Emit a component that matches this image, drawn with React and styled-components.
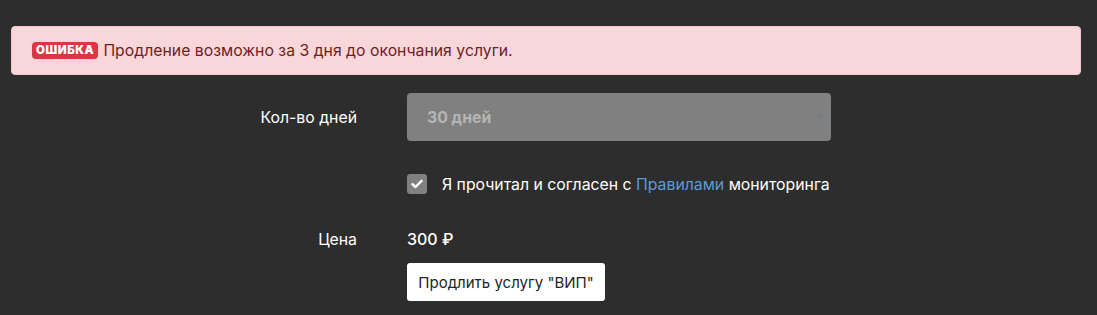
import React, { useState } from "react";
import styled, { createGlobalStyle } from "styled-components";

const GlobalStyle = createGlobalStyle`
  html, body {
    margin: 0;
    padding: 0;
    background: #2d2d2d;
    font-family: Inter, Roboto, "Noto Sans", sans-serif;
  }
`;

const Page = styled.div`
  padding: 26px 16px 0 11px;
`;

const Alert = styled.div`
  display: flex;
  align-items: center;
  height: 49px;
  box-sizing: border-box;
  padding: 0 20px;
  background: #f8d7da;
  border: 1px solid #f5c6cb;
  border-radius: 4px;
  color: #721c24;
  font-size: 15.8px;
`;

const Badge = styled.span`
  display: inline-block;
  background: #dc3545;
  color: #fff;
  font-size: 11.5px;
  font-weight: 900;
  line-height: 17px;
  padding: 0 4px;
  border-radius: 4px;
  margin-right: 5px;
  letter-spacing: 0.6px;
`;

const Form = styled.div`
  display: flex;
  flex-direction: column;
  margin-top: 18px;
`;

const Row = styled.div`
  display: flex;
  align-items: center;
  min-height: 20px;
  margin-bottom: ${(p) => p.gap || 0}px;
`;

const Label = styled.div`
  width: 120px;
  margin-left: 226px;
  margin-right: 50px;
  text-align: right;
  color: #fff;
  font-size: 15.8px;
  flex-shrink: 0;
`;

const Select = styled.div`
  position: relative;
  width: 424px;
  height: 48px;
  box-sizing: border-box;
  background: #808080;
  border-radius: 4px;
  padding: 0 20px;
  display: flex;
  align-items: center;
  color: #b5b5b5;
  font-size: 15.8px;
  font-weight: 700;
  &::after {
    content: "";
    position: absolute;
    right: 9px;
    top: 22px;
    border-left: 3px solid transparent;
    border-right: 3px solid transparent;
    border-top: 3px solid #6c7b8a;
  }
`;

const Check = styled.label`
  display: flex;
  align-items: center;
  gap: 15px;
  color: #fff;
  font-size: 15.8px;
  cursor: pointer;
`;

const Box = styled.span`
  width: 20px;
  height: 20px;
  border-radius: 3px;
  background: #808080;
  display: flex;
  align-items: center;
  justify-content: center;
`;

const Link = styled.a`
  color: #5b9bd5;
  text-decoration: none;
`;

const Price = styled.div`
  color: #fff;
  font-size: 16px;
  font-weight: 500;
`;

const Button = styled.button`
  height: 38px;
  width: 198px;
  padding: 0;
  background: #fff;
  border: none;
  border-radius: 3px;
  color: #212529;
  font-family: inherit;
  font-size: 15px;
  cursor: pointer;
`;

export default function App() {
  const [agree, setAgree] = useState(true);
  return (
    <Page>
      <GlobalStyle />
      <Alert>
        <Badge>ОШИБКА</Badge>
        Продление возможно за 3 дня до окончания услуги.
      </Alert>
      <Form>
        <Row gap={33}>
          <Label>Кол-во дней</Label>
          <Select>30 дней</Select>
        </Row>
        <Row gap={35}>
          <Label />
          <Check onClick={() => setAgree(!agree)}>
            <Box>
              {agree && (
                <svg width="12" height="10" viewBox="0 0 12 10">
                  <path d="M1.5 5.2 L4.5 8 L10.5 1.8" stroke="#fff" strokeWidth="2.4" fill="none" strokeLinecap="round" strokeLinejoin="round" />
                </svg>
              )}
            </Box>
            <span>
              Я прочитал и согласен с <Link href="#">Правилами</Link> мониторинга
            </span>
          </Check>
        </Row>
        <Row gap={14}>
          <Label>Цена</Label>
          <Price>300 ₽</Price>
        </Row>
        <Row>
          <Label />
          <Button>Продлить услугу "ВИП"</Button>
        </Row>
      </Form>
    </Page>
  );
}
